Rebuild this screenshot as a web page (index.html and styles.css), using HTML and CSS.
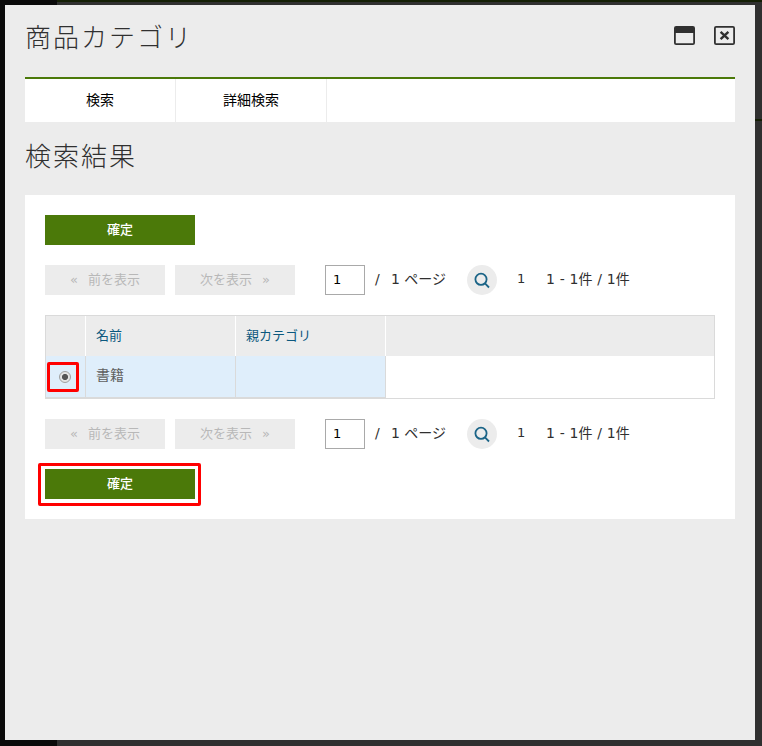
FILE: index.html
```
<!DOCTYPE html>
<html lang="ja">
<head>
<meta charset="utf-8">
<title>商品カテゴリ</title>
<link rel="stylesheet" href="styles.css">
</head>
<body>
<main class="dialog">
  <header class="dialog-header">
    <h1>商品カテゴリ</h1>
    <div class="window-actions">
      <svg width="21" height="19" viewBox="0 0 21 19"><rect x=".9" y=".9" width="19.2" height="17.2" rx="1.2" fill="none" stroke="#303030" stroke-width="1.8"/><path d="M1 1h19v6H1z" fill="#303030"/></svg>
      <svg width="21" height="19" viewBox="0 0 21 19"><rect x=".9" y=".9" width="19.2" height="17.2" rx="1.2" fill="none" stroke="#303030" stroke-width="1.8"/><path d="M6.6 5.8l7.8 7.4M14.4 5.8l-7.8 7.4" fill="none" stroke="#303030" stroke-width="2.4"/></svg>
    </div>
  </header>
  <nav class="tabs"><a>検索</a><a>詳細検索</a></nav>
  <h2>検索結果</h2>
  <section class="panel">
    <button class="confirm">確定</button>
    <div class="pager">
      <button class="step"><span class="arrow">«</span><span>前を表示</span></button>
      <button class="step"><span>次を表示</span><span class="arrow">»</span></button>
      <input class="page-input" type="text" value="1">
      <span class="slash">/</span><span class="pages">1 ページ</span>
      <span class="search"><svg width="30" height="30" viewBox="0 0 30 30"><circle cx="14" cy="14.3" r="5.6"/><path d="M18 18.4l4 4.1"/></svg></span>
      <span class="current">1</span><span class="range">1 - 1件 / 1件</span>
    </div>
    <div class="table">
      <div class="row head"><div class="cell pick"></div><div class="cell">名前</div><div class="cell">親カテゴリ</div></div>
      <div class="row body"><div class="cell pick"><span class="radio"></span><span class="mark mark-radio"></span></div><div class="cell">書籍</div><div class="cell"></div></div>
    </div>
    <div class="pager">
      <button class="step"><span class="arrow">«</span><span>前を表示</span></button>
      <button class="step"><span>次を表示</span><span class="arrow">»</span></button>
      <input class="page-input" type="text" value="1">
      <span class="slash">/</span><span class="pages">1 ページ</span>
      <span class="search"><svg width="30" height="30" viewBox="0 0 30 30"><circle cx="14" cy="14.3" r="5.6"/><path d="M18 18.4l4 4.1"/></svg></span>
      <span class="current">1</span><span class="range">1 - 1件 / 1件</span>
    </div>
    <div class="confirm-wrap"><button class="confirm">確定</button><span class="mark mark-confirm"></span></div>
  </section>
</main>
</body>
</html>
```
FILE: styles.css
```
* { box-sizing: border-box; }
body {
  margin: 0;
  height: 746px;
  padding: 5px 7px 6px 5px;
  overflow: hidden;
  background:
    linear-gradient(#0a0a0a, #0a0a0a) 0 0 / 57px 746px no-repeat,
    linear-gradient(#141f05, #141f05) 57px 0 / 705px 2px no-repeat,
    linear-gradient(#141f05, #141f05) 755px 119px / 7px 2px no-repeat,
    #303030;
  font: 13px/20px "DejaVu Sans", "Noto Sans CJK JP", sans-serif;
  color: #303030;
}
.dialog { height: 735px; padding: 0 20px; background: #ececec; }
.dialog-header { display: flex; justify-content: space-between; height: 72px; padding-top: 12px; }
h1, h2 {
  margin: 0;
  font: 300 26px/38px "Noto Sans CJK JP", sans-serif;
  letter-spacing: 2px;
}
.window-actions { display: flex; gap: 19px; padding-top: 9px; }
.window-actions svg { display: block; }
.tabs { display: flex; height: 45px; background: #fff; border-top: 2px solid #4b7909; }
.tabs a {
  width: 151px;
  border-right: 1px solid #ececec;
  color: #000;
  font: 14px/40px "Noto Sans CJK JP", sans-serif;
  text-align: center;
}
h2 { height: 73px; padding-top: 14px; }
.panel { height: 324px; padding: 20px; background: #fff; }
button { border: 0; padding: 0; font: 13px/20px "DejaVu Sans", "Noto Sans CJK JP", sans-serif; }
.confirm {
  display: block;
  width: 150px;
  height: 30px;
  background: #4b7909;
  color: #fff;
  font-weight: 500;
}
.pager { display: flex; height: 30px; margin: 20px 0; line-height: 28px; white-space: pre; }
.step {
  display: flex;
  justify-content: center;
  gap: 10px;
  width: 120px;
  height: 30px;
  margin-right: 10px;
  background: #ececec;
  color: #b8b8b8;
  line-height: 29px;
}
.page-input {
  width: 40px;
  height: 30px;
  margin-left: 20px;
  padding: 0 7px 1px;
  border: 1px solid #a9a9a9;
  border-radius: 0;
  font: 13px "DejaVu Sans", sans-serif;
  color: #000;
}
.slash { width: 16px; margin-left: 10px; font-size: 14px; }
.pages { width: 76px; font-size: 14px; }
.search { width: 30px; height: 30px; border-radius: 50%; background: #ececec; }
.search svg { display: block; fill: none; stroke: #1b6487; stroke-width: 1.8; }
.current { width: 29px; margin-left: 20px; }
.range { font-size: 14px; letter-spacing: .15px; }
.table { height: 84px; border: 1px solid #dadada; }
.row { display: flex; }
.cell { width: 150px; padding-left: 10px; border-right: 1px solid #dadada; }
.cell.pick { position: relative; width: 40px; padding: 0; }
.head { height: 40px; background: #ececec; color: #0b587e; line-height: 39px; }
.head .cell { border-color: #fff; }
.body { height: 42px; color: #606060; font-size: 14px; line-height: 39px; }
.body .cell { background: #dfeefb; border-bottom: 1px solid #dadada; }
.radio {
  display: block;
  width: 12px;
  height: 12px;
  margin: 15px 0 0 13px;
  border: 1px solid #a0a0a0;
  border-radius: 50%;
  background: radial-gradient(circle, #555 0 2.7px, #e4e4e4 3.4px);
}
.mark { position: absolute; border: 3px solid #f00; border-radius: 2px; }
.mark-radio { left: 1px; top: 6px; width: 32px; height: 30px; }
.confirm-wrap { position: relative; }
.mark-confirm { left: -7px; top: -6px; width: 163px; height: 43px; }
```
